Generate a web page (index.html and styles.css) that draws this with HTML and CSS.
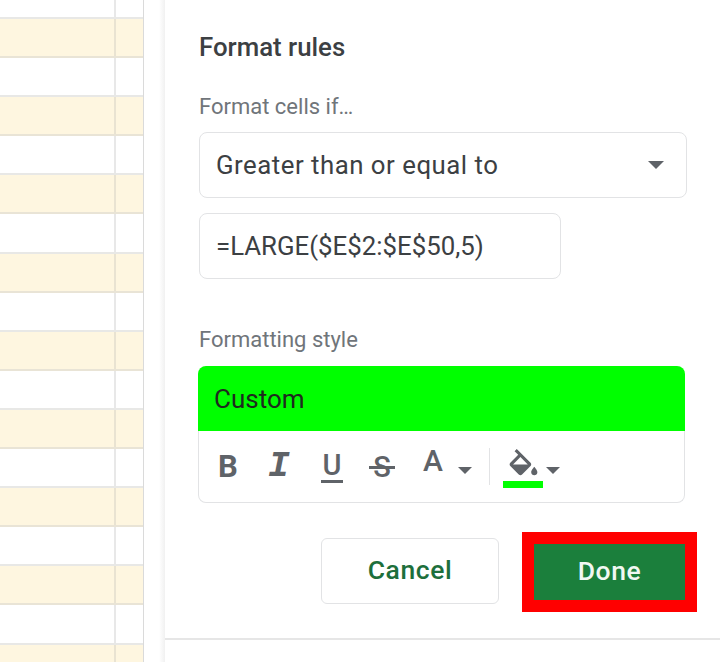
FILE: index.html
```html
<!DOCTYPE html>
<html lang="en">
<head>
    <meta charset="UTF-8">
    <meta name="viewport" content="width=device-width, initial-scale=1.0">
    <title>Format rules</title>
    <link rel="stylesheet" href="styles.css">
</head>
<body>

<div class="app">
    <!-- Sheet behind the panel -->
    <div class="sheet">
        <div class="row first"><div class="cell"></div><div class="cell last"></div></div>
        <div class="row cream"><div class="cell"></div><div class="cell last"></div></div>
        <div class="row"><div class="cell"></div><div class="cell last"></div></div>
        <div class="row cream"><div class="cell"></div><div class="cell last"></div></div>
        <div class="row"><div class="cell"></div><div class="cell last"></div></div>
        <div class="row cream"><div class="cell"></div><div class="cell last"></div></div>
        <div class="row"><div class="cell"></div><div class="cell last"></div></div>
        <div class="row cream"><div class="cell"></div><div class="cell last"></div></div>
        <div class="row"><div class="cell"></div><div class="cell last"></div></div>
        <div class="row cream"><div class="cell"></div><div class="cell last"></div></div>
        <div class="row"><div class="cell"></div><div class="cell last"></div></div>
        <div class="row cream"><div class="cell"></div><div class="cell last"></div></div>
        <div class="row"><div class="cell"></div><div class="cell last"></div></div>
        <div class="row cream"><div class="cell"></div><div class="cell last"></div></div>
        <div class="row"><div class="cell"></div><div class="cell last"></div></div>
        <div class="row cream"><div class="cell"></div><div class="cell last"></div></div>
        <div class="row"><div class="cell"></div><div class="cell last"></div></div>
        <div class="row cream"><div class="cell"></div><div class="cell last"></div></div>
    </div>

    <div class="gutter"></div>

    <!-- Format rules panel -->
    <div class="panel">
        <div class="panel-body">
            <h2 class="title">Format rules</h2>
            <div class="label cells-label">Format cells if…</div>
            <div class="field select">
                <span>Greater than or equal to</span>
                <span class="caret"></span>
            </div>
            <div class="field formula">=LARGE($E$2:$E$50,5)</div>
            <div class="label style-label">Formatting style</div>

            <div class="style-card">
                <div class="preview">Custom</div>
                <div class="toolbar">
                    <span class="tool bold">B</span>
                    <span class="tool italic">I</span>
                    <span class="tool underline">U</span>
                    <span class="tool strike">S</span>
                    <span class="tool letter">A</span>
                    <span class="caret small"></span>
                    <span class="divider"></span>
                    <span class="fill">
                        <svg class="bucket" viewBox="0 0 24 24" width="37" height="37">
                            <path d="M16.56 8.94L7.62 0 6.21 1.41l2.38 2.38-5.15 5.15c-.59.59-.59 1.54 0 2.12l5.5 5.5c.29.29.68.44 1.06.44s.77-.15 1.06-.44l5.5-5.5c.59-.58.59-1.53 0-2.12zM5.21 10L10 5.21 14.79 10H5.21zM19 11.5s-2 2.17-2 3.5c0 1.1.9 2 2 2s2-.9 2-2c0-1.33-2-3.5-2-3.5z"/>
                        </svg>
                        <span class="fill-bar"></span>
                    </span>
                    <span class="caret small"></span>
                </div>
            </div>

            <div class="actions">
                <button class="btn cancel">Cancel</button>
                <div class="highlight"><button class="btn done">Done</button></div>
            </div>
        </div>
        <div class="panel-foot"></div>
    </div>
</div>

</body>
</html>
```

FILE: styles.css
```css
body {
    margin: 0;
    font-family: Roboto, "Liberation Sans", sans-serif;
    background-color: #fff;
}
.app {
    display: flex;
    width: 720px;
    height: 662px;
    overflow: hidden;
}

/* Sheet */
.sheet {
    width: 143px;
    height: 662px;
    flex-shrink: 0;
    overflow: hidden;
    border-right: 1px solid #dadada;
}
.row {
    display: flex;
    height: 39.1px;
    box-sizing: border-box;
    border-bottom: 2px solid #e8e8e6;
}
.row.first {
    height: 19px;
}
.row.cream {
    background-color: #fef6e0;
    border-bottom-color: #e9e4d6;
}
.cell {
    width: 114px;
    border-right: 2px solid #e8e8e8;
}
.cream .cell {
    border-right-color: #e9e3d2;
}
.cell.last {
    width: 27px;
    border-right: none;
}
.gutter {
    width: 21px;
    flex-shrink: 0;
    background: linear-gradient(to right, #fff 0, #fff 15px, #f1f1f1 21px);
}

/* Panel */
.panel {
    flex: 1;
    display: flex;
    flex-direction: column;
    background-color: #fff;
}
.panel-body {
    height: 638px;
    box-sizing: border-box;
    padding: 33px 33px 0 34px;
}
.panel-foot {
    border-top: 2px solid #e6e6e6;
}
.title {
    margin: 0;
    font-size: 25.8px;
    font-weight: 500;
    line-height: 28px;
    color: #3c4043;
}
.label {
    font-size: 22px;
    line-height: 24px;
    color: #70757a;
}
.cells-label {
    margin-top: 34px;
}
.field {
    box-sizing: border-box;
    height: 66px;
    padding: 0 16px;
    border: 1px solid #e2e3e5;
    border-radius: 8px;
    display: flex;
    align-items: center;
    color: #3c4043;
    font-size: 25.8px;
}
.select {
    width: 488px;
    margin-top: 13px;
    justify-content: space-between;
    letter-spacing: 0.5px;
}
.formula {
    width: 362px;
    margin-top: 15px;
}
.caret {
    width: 0;
    height: 0;
    margin-right: 6px;
    border-left: 8px solid transparent;
    border-right: 8px solid transparent;
    border-top: 8px solid #5f6368;
}
.style-label {
    margin-top: 49px;
}

/* Formatting style card */
.style-card {
    width: 487px;
    height: 137px;
    margin-top: 14px;
    margin-left: -1px;
    border-radius: 8px 8px 0 0;
    overflow: hidden;
}
.preview {
    height: 65px;
    padding-left: 16px;
    display: flex;
    align-items: center;
    background-color: #00ff00;
    color: #1f2a1f;
    font-size: 26px;
}
.toolbar {
    display: flex;
    align-items: center;
    height: 72px;
    box-sizing: border-box;
    padding-left: 19px;
    border: 1px solid #e2e3e5;
    border-top: none;
    border-radius: 0 0 8px 8px;
    color: #5f6368;
}
.tool {
    font-size: 31px;
    line-height: 34px;
}
.bold {
    width: 50px;
    font-weight: 700;
}
.italic {
    width: 53px;
    font-family: "Liberation Mono", monospace;
    font-size: 36px;
    font-weight: 700;
    font-style: italic;
}
.underline {
    width: 22px;
    margin-right: 26px;
    font-size: 29px;
    font-weight: 500;
    line-height: 30px;
    text-align: center;
    border-bottom: 3px solid #5f6368;
}
.strike {
    width: 26px;
    margin-right: 28px;
    font-size: 29px;
    font-weight: 500;
    text-align: center;
    background: linear-gradient(#5f6368, #5f6368) center 54% / 100% 3px no-repeat;
}
.letter {
    width: 35px;
    margin-top: -11px;
    font-size: 30px;
    font-weight: 500;
}
.caret.small {
    margin-right: 0;
    margin-top: 8px;
    border-left-width: 7px;
    border-right-width: 7px;
    border-top-width: 7px;
}
.divider {
    width: 1px;
    height: 37px;
    margin: 0 13px 0 17px;
    background-color: #e2e3e5;
}
.fill {
    display: flex;
    flex-direction: column;
    align-items: center;
    width: 40px;
    margin-right: 3px;
}
.bucket {
    fill: #5f6368;
    margin-top: 3px;
    margin-bottom: -5px;
}
.fill-bar {
    width: 40px;
    height: 7px;
    background-color: #00ff00;
}

/* Buttons */
.actions {
    display: flex;
    justify-content: flex-end;
    align-items: center;
    margin-top: 29px;
    margin-right: -10px;
    gap: 23px;
}
.btn {
    padding: 0 0 4px;
    font-family: Roboto, "Liberation Sans", sans-serif;
    font-size: 26.5px;
    font-weight: 500;
    letter-spacing: 0.6px;
    cursor: pointer;
}
.cancel {
    width: 178px;
    height: 66px;
    margin-bottom: 2px;
    background-color: #fff;
    border: 1px solid #e2e3e5;
    border-radius: 6px;
    color: #1d6f3c;
}
.highlight {
    border: 12px solid #ff0000;
}
.done {
    display: block;
    width: 151px;
    height: 56px;
    border: none;
    border-radius: 0;
    background-color: #1b7f3c;
    color: #f1f8f3;
}
```
